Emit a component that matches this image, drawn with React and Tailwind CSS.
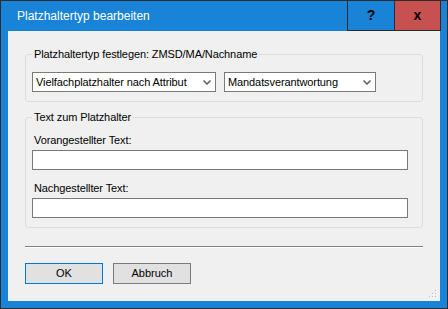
import React from "react";

const F = { fontFamily: '"Liberation Sans", Arial, sans-serif' };

function Chevron() {
  return (
    <svg width="8" height="5" viewBox="0 0 8 5" className="shrink-0">
      <path d="M0.5 0.5 L4 4 L7.5 0.5" fill="none" stroke="#5a5a5a" strokeWidth="1.5" />
    </svg>
  );
}

function Select({ text, w }) {
  return (
    <div className={`${w} h-[20px] bg-white border border-[#7a7a7a] flex items-center justify-between pl-[3px] pr-[4px]`}>
      <span className="text-[11px] leading-[13px] tracking-[-0.1px] text-black whitespace-nowrap">{text}</span>
      <Chevron />
    </div>
  );
}

function Grip() {
  const dots = [
    [6, 0],
    [3, 3],
    [6, 3],
    [0, 6],
    [3, 6],
    [6, 6],
  ];
  return (
    <svg width="9" height="9" viewBox="0 0 9 9" className="absolute right-[2px] bottom-[2px]">
      {dots.map(([x, y], i) => (
        <g key={i}>
          <rect x={x + 1} y={y + 1} width="1" height="1" fill="#ffffff" />
          <rect x={x} y={y} width="1" height="1" fill="#b8b8b8" />
        </g>
      ))}
    </svg>
  );
}

export default function App() {
  return (
    <div className="w-[448px] h-[309px] bg-[#1883d7] border border-[#2b2b2b] flex flex-col" style={F}>
      <div className="h-[30px] flex items-start shrink-0">
        <div className="flex-1 h-[30px] flex items-center pl-[16px] text-white text-[12px]">
          Platzhaltertyp bearbeiten
        </div>
        <div className="flex mr-[6px]">
          <div className="w-[48px] h-[30px] border-l border-r border-b border-[#2b2b2b] bg-[#1883d7] flex items-center justify-center text-[14px] font-bold text-black">
            ?
          </div>
          <div className="w-[46px] h-[30px] border-r border-b border-[#2b2b2b] bg-[#c75050] flex items-center justify-center text-[14px] font-bold text-black">
            x
          </div>
        </div>
      </div>
      <div className="mx-[7px] h-[270px] bg-[#f0f0f0] relative flex flex-col px-[17px]">
        <fieldset className="mt-[17px] border border-[#dcdcdc] rounded-[3px] px-[6px] pb-[9px] pt-[11px]">
          <legend className="px-[2px] text-[11px] leading-[13px] tracking-[-0.1px] text-black">
            Platzhaltertyp festlegen: ZMSD/MA/Nachname
          </legend>
          <div className="flex gap-[8px]">
            <Select text="Vielfachplatzhalter nach Attribut" w="w-[184px]" />
            <Select text="Mandatsverantwortung" w="w-[152px]" />
          </div>
        </fieldset>
        <fieldset className="mt-[9px] border border-[#dcdcdc] rounded-[3px] px-[6px] pb-[9px] pt-[10px]">
          <legend className="px-[2px] text-[11px] leading-[13px] tracking-[-0.1px] text-black">Text zum Platzhalter</legend>
          <div className="pl-[2px] text-[11px] leading-[13px] tracking-[-0.1px] text-black">Vorangestellter Text:</div>
          <div className="mt-[3px] w-[376px] h-[20px] bg-white border border-[#7a7a7a]" />
          <div className="mt-[12px] pl-[2px] text-[11px] leading-[13px] tracking-[-0.1px] text-black">Nachgestellter Text:</div>
          <div className="mt-[3px] w-[376px] h-[20px] bg-white border border-[#7a7a7a]" />
        </fieldset>
        <div className="mt-[18px] h-[2px] border-t border-[#808080] border-b border-b-white" />
        <div className="mt-[15px] flex gap-[10px]">
          <div className="w-[78px] h-[21px] bg-[#e1e1e1] border border-[#0078d7] flex items-center justify-center text-[11px] text-black">
            OK
          </div>
          <div className="w-[78px] h-[21px] bg-[#e1e1e1] border border-[#7a7a7a] flex items-center justify-center text-[11px] text-black">
            Abbruch
          </div>
        </div>
        <Grip />
      </div>
    </div>
  );
}
